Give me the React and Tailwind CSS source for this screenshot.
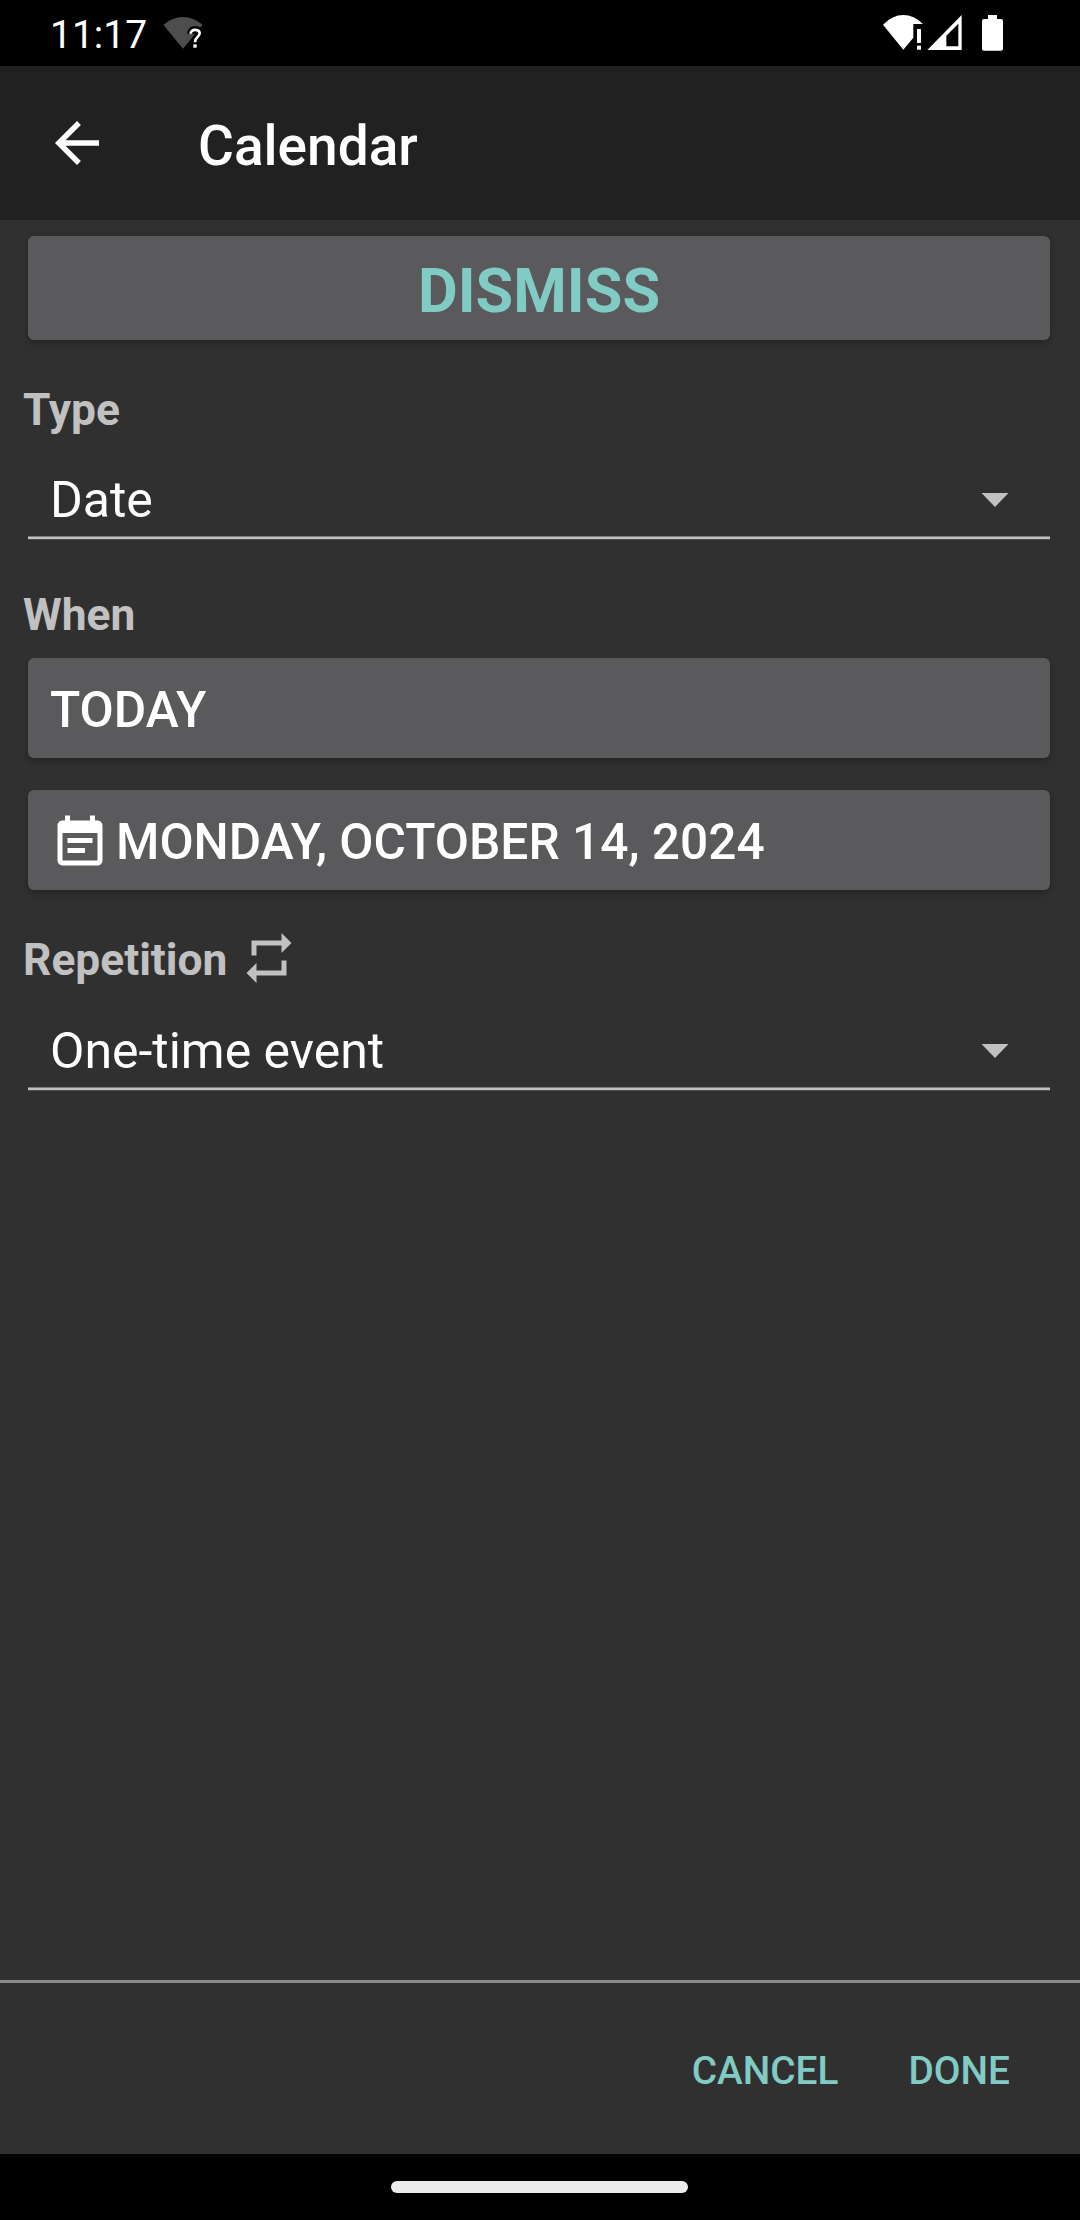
import React from "react";
import { MdArrowBack, MdEventNote, MdRepeat } from "react-icons/md";

function WifiUnknown() {
  return (
    <svg className="ml-4 mt-[17px] h-8 w-10" viewBox="490 51 120 96" fill="none">
      <path d="M491 74Q519 51 550 51Q581 51 609 74L550 146Z" fill="#4d4d4d" />
      <path d="M573 101C573 85 600 85 600 100C600 111 586 111 586 125V142" stroke="#000" strokeWidth="22" />
      <path d="M573 101C573 86 600 86 600 100C600 111 586 110 586 127" stroke="#fff" strokeWidth="8" />
      <rect x="581" y="133" width="10" height="10" fill="#fff" />
    </svg>
  );
}

function WifiAlert() {
  return (
    <svg className="h-9 w-[41px]" viewBox="69 45 123 108" fill="#fff">
      <path d="M69 74Q97 45 130 45Q162 45 189 72H160V113L130 149Z" />
      <rect x="171" y="87" width="12" height="42" />
      <rect x="171" y="137" width="12" height="12" />
    </svg>
  );
}

function Signal() {
  return (
    <svg className="ml-[3px] h-9 w-[35px]" viewBox="201 45 105 108" fill="#fff">
      <path fillRule="evenodd" d="M202 150L305 45V150ZM259 107V139H295V71Z" />
    </svg>
  );
}

function Battery() {
  return (
    <svg className="ml-5 h-9 w-[21px]" viewBox="366 45 63 108" fill="#fff">
      <path d="M384 45H411V57H423Q429 57 429 63V146Q429 152 423 152H372Q366 152 366 146V63Q366 57 372 57H384Z" />
    </svg>
  );
}

function Spinner({ label }) {
  return (
    <div className="ml-7 mr-[30px]">
      <div className="flex h-[72px] items-center justify-between pl-[22px] pr-[41px] text-[50px] leading-[50px]">
        <span>{label}</span>
        <svg className="h-[14px] w-7" viewBox="0 0 28 14" fill="#c1c1c1">
          <path d="M0.5 0H27.5L14 14Z" />
        </svg>
      </div>
      <div className="h-1 border-y border-t-[#7c7c7c] border-b-[#4c4c4c] bg-[#c1c1c1]" />
    </div>
  );
}

const button =
  "ml-7 mr-[30px] flex items-center rounded-[6px] bg-[#5a5a5c] shadow-[0_3px_6px_rgba(0,0,0,0.25)]";

export default function App() {
  return (
    <div className="flex h-[2220px] w-[1080px] flex-col bg-[#303030] font-['Roboto',sans-serif] text-white">
      <div className="flex h-[66px] shrink-0 bg-black pl-[50px]">
        <span className="mt-[14px] text-[39px] leading-[42px]">11:17</span>
        <WifiUnknown />
        <div className="ml-auto mr-[77px] flex pt-[15px]">
          <WifiAlert />
          <Signal />
          <Battery />
        </div>
      </div>

      <header className="flex h-[154px] shrink-0 items-center bg-[#212121] pl-11">
        <MdArrowBack className="size-[66px]" />
        <h1 className="ml-[88px] pt-[6px] text-[55px] font-medium leading-none">Calendar</h1>
      </header>

      <main className="flex flex-1 flex-col pt-4">
        <button className={`${button} h-[104px] justify-center px-[30px] pt-[6px] text-[61.2px] font-bold leading-[62px] text-[#80cbc4]`}>
          DISMISS
        </button>
        <h2 className="mb-6 ml-[23px] mt-10 h-[60px] text-[44.3px] font-bold leading-[60px] text-[#c1c1c1]">Type</h2>
        <Spinner label="Date" />
        <h2 className="mb-[13px] ml-[23px] mt-[45px] h-[60px] text-[44.3px] font-bold leading-[60px] text-[#c1c1c1]">When</h2>
        <button className={`${button} h-[100px] pl-[22px] pt-1 text-[49.7px] font-medium leading-[50px]`}>TODAY</button>
        <button className={`${button} mt-8 h-[100px] pl-[22px] text-[49.65px] font-medium leading-[50px]`}>
          <MdEventNote className="mt-[5px] size-[60px]" />
          <span className="ml-[6px] pt-1">MONDAY, OCTOBER 14, 2024</span>
        </button>
        <div className="mb-[27px] ml-[23px] mt-[38px] flex h-[60px] items-center text-[#c1c1c1]">
          <h2 className="pt-1 text-[44.3px] font-bold leading-[44px]">Repetition</h2>
          <MdRepeat className="ml-3 size-[60px]" />
        </div>
        <Spinner label="One-time event" />
      </main>

      <footer className="flex h-[174px] shrink-0 items-center justify-end border-t-[3px] border-[#8a8a8a] pr-[70px] pt-1 text-[38.8px] font-medium leading-[39px] text-[#80cbc4]">
        <button>CANCEL</button>
        <button className="ml-[70px]">DONE</button>
      </footer>

      <div className="flex h-[66px] shrink-0 justify-center bg-black pr-[1px] pt-[27px]">
        <div className="h-3 w-[297px] rounded-full bg-[#ebebeb]" />
      </div>
    </div>
  );
}
